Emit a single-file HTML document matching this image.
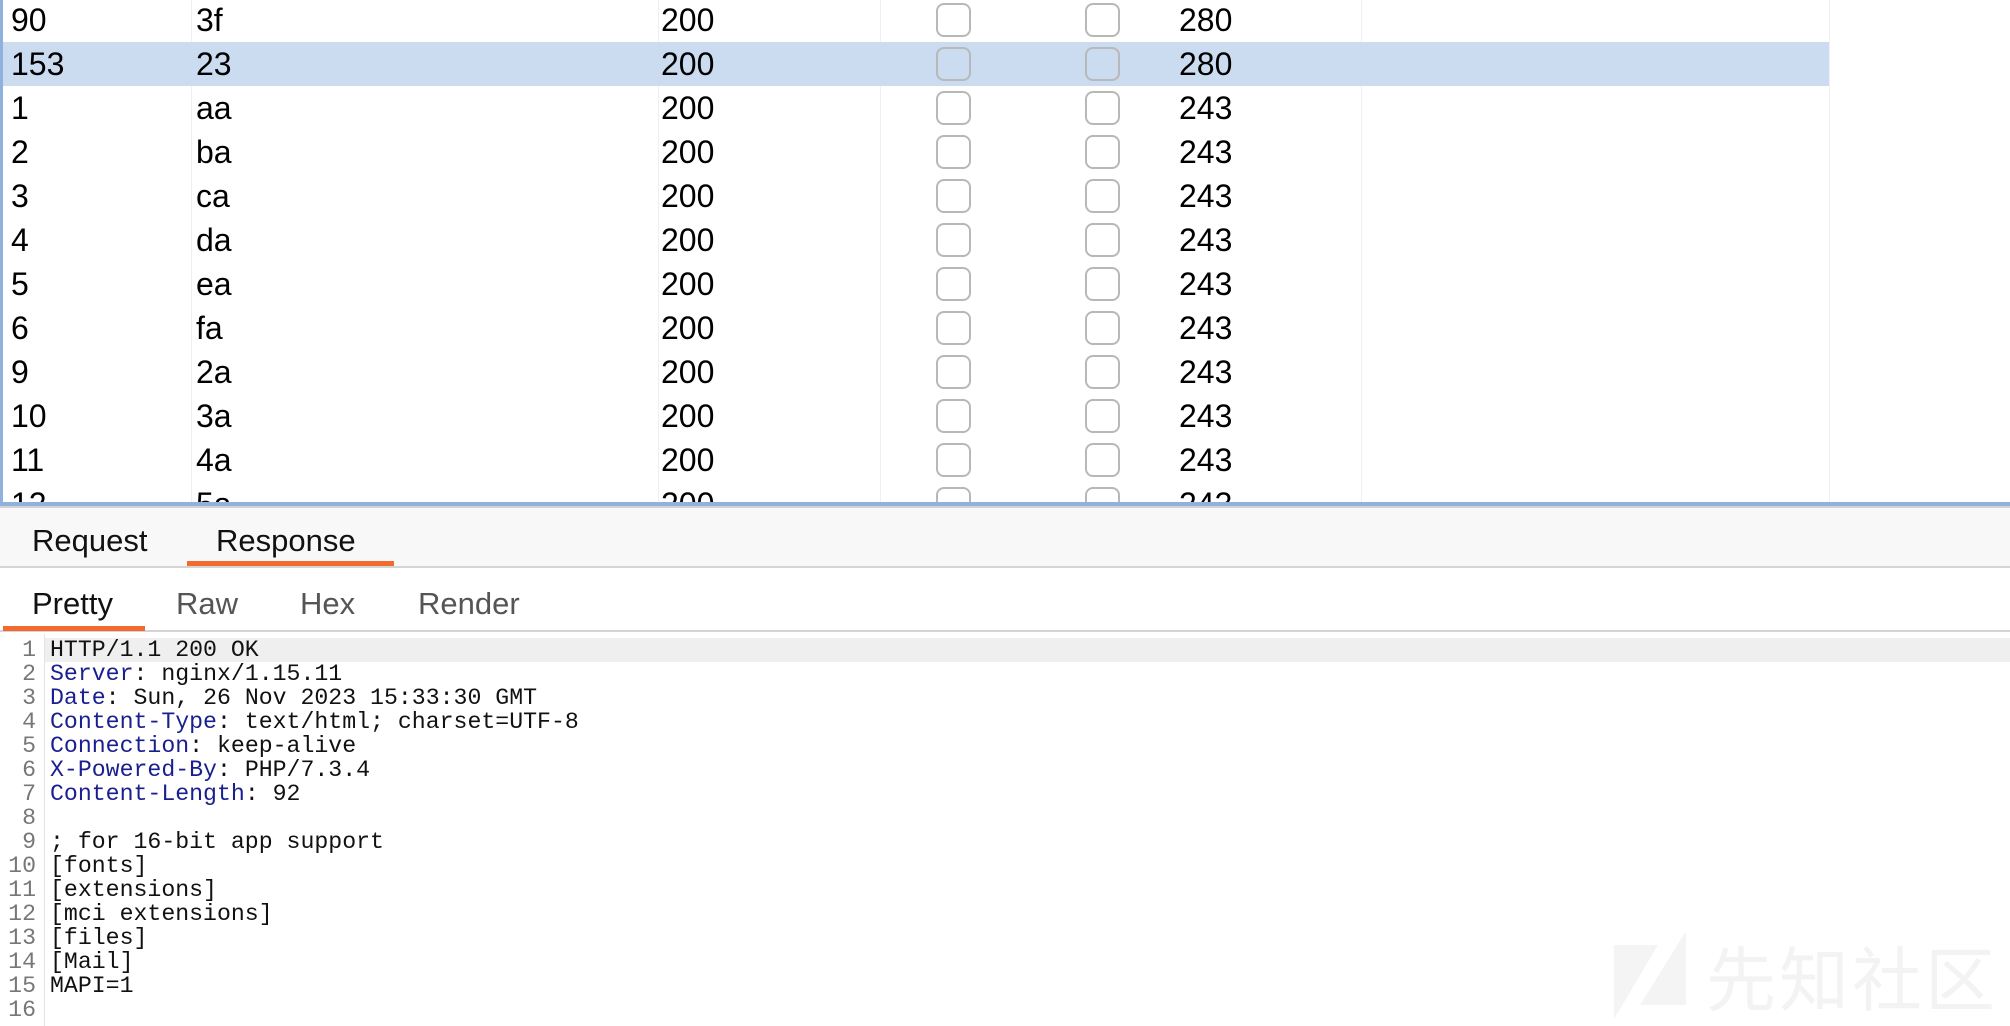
<!DOCTYPE html>
<html><head><meta charset="utf-8"><style>
*{margin:0;padding:0;box-sizing:border-box}
body{width:2010px;height:1026px;overflow:hidden;background:#fff;position:relative;font-family:"Liberation Sans",Arial,sans-serif}
.tbl{position:absolute;left:0;top:0;width:2010px;height:502px;overflow:hidden;border-left:3px solid #8fb1dc}
.row{position:absolute;left:0;height:44px;width:2010px}
.row.sel{background:#cbdbf0;width:1826px}
.c{position:absolute;top:0;line-height:44px;font-size:32px;color:#000}
.vl{position:absolute;top:0;height:502px;width:1px;background:#f0f0f0}
.cb{position:absolute;top:5px;width:35px;height:34px;border:2px solid #b8b8b8;border-radius:8px;background:transparent}
.tb{position:absolute;left:0;top:502px;width:2010px;height:4px;background:#8fb1dc}
.bar1{position:absolute;left:0;top:506px;width:2010px;height:62px;background:#f8f8f8;border-top:2px solid #d4d4d4;border-bottom:2px solid #d4d4d4}
.t{position:absolute;font-size:31px;color:#111}
.bar2{position:absolute;left:0;top:568px;width:2010px;height:64px;border-bottom:2px solid #d4d4d4;background:#fff}
.code{position:absolute;left:0;top:638px;font-family:"Liberation Mono",monospace;font-size:23.2px}
.ln{position:absolute;left:0;width:36px;text-align:right;color:#777;height:24px;line-height:24px}
.tx{position:absolute;left:50px;height:24px;line-height:24px;color:#111;white-space:pre}
.k{color:#1a1f8f}
</style></head><body>
<div class="tbl">
<div class="vl" style="left:188px"></div><div class="vl" style="left:655px"></div><div class="vl" style="left:877px"></div><div class="vl" style="left:1358px"></div><div class="vl" style="left:1826px"></div>
<div class="row" style="top:-2px"><span class="c" style="left:8px">90</span><span class="c" style="left:193px">3f</span><span class="c" style="left:658px">200</span><span class="cb" style="left:933px"></span><span class="cb" style="left:1082px"></span><span class="c" style="left:1176px">280</span></div>
<div class="row sel" style="top:42px"><span class="c" style="left:8px">153</span><span class="c" style="left:193px">23</span><span class="c" style="left:658px">200</span><span class="cb" style="left:933px"></span><span class="cb" style="left:1082px"></span><span class="c" style="left:1176px">280</span></div>
<div class="row" style="top:86px"><span class="c" style="left:8px">1</span><span class="c" style="left:193px">aa</span><span class="c" style="left:658px">200</span><span class="cb" style="left:933px"></span><span class="cb" style="left:1082px"></span><span class="c" style="left:1176px">243</span></div>
<div class="row" style="top:130px"><span class="c" style="left:8px">2</span><span class="c" style="left:193px">ba</span><span class="c" style="left:658px">200</span><span class="cb" style="left:933px"></span><span class="cb" style="left:1082px"></span><span class="c" style="left:1176px">243</span></div>
<div class="row" style="top:174px"><span class="c" style="left:8px">3</span><span class="c" style="left:193px">ca</span><span class="c" style="left:658px">200</span><span class="cb" style="left:933px"></span><span class="cb" style="left:1082px"></span><span class="c" style="left:1176px">243</span></div>
<div class="row" style="top:218px"><span class="c" style="left:8px">4</span><span class="c" style="left:193px">da</span><span class="c" style="left:658px">200</span><span class="cb" style="left:933px"></span><span class="cb" style="left:1082px"></span><span class="c" style="left:1176px">243</span></div>
<div class="row" style="top:262px"><span class="c" style="left:8px">5</span><span class="c" style="left:193px">ea</span><span class="c" style="left:658px">200</span><span class="cb" style="left:933px"></span><span class="cb" style="left:1082px"></span><span class="c" style="left:1176px">243</span></div>
<div class="row" style="top:306px"><span class="c" style="left:8px">6</span><span class="c" style="left:193px">fa</span><span class="c" style="left:658px">200</span><span class="cb" style="left:933px"></span><span class="cb" style="left:1082px"></span><span class="c" style="left:1176px">243</span></div>
<div class="row" style="top:350px"><span class="c" style="left:8px">9</span><span class="c" style="left:193px">2a</span><span class="c" style="left:658px">200</span><span class="cb" style="left:933px"></span><span class="cb" style="left:1082px"></span><span class="c" style="left:1176px">243</span></div>
<div class="row" style="top:394px"><span class="c" style="left:8px">10</span><span class="c" style="left:193px">3a</span><span class="c" style="left:658px">200</span><span class="cb" style="left:933px"></span><span class="cb" style="left:1082px"></span><span class="c" style="left:1176px">243</span></div>
<div class="row" style="top:438px"><span class="c" style="left:8px">11</span><span class="c" style="left:193px">4a</span><span class="c" style="left:658px">200</span><span class="cb" style="left:933px"></span><span class="cb" style="left:1082px"></span><span class="c" style="left:1176px">243</span></div>
<div class="row" style="top:482px"><span class="c" style="left:8px">12</span><span class="c" style="left:193px">5a</span><span class="c" style="left:658px">200</span><span class="cb" style="left:933px"></span><span class="cb" style="left:1082px"></span><span class="c" style="left:1176px">243</span></div>
</div>
<div class="tb"></div>
<div class="bar1">
<span class="t" style="left:32px;top:15px">Request</span>
<span class="t" style="left:216px;top:15px">Response</span>
<div style="position:absolute;left:187px;top:53px;width:207px;height:5px;background:#f26a30"></div>
</div>
<div class="bar2">
<span class="t" style="left:32px;top:18px">Pretty</span>
<span class="t" style="left:176px;top:18px;color:#555">Raw</span>
<span class="t" style="left:300px;top:18px;color:#555">Hex</span>
<span class="t" style="left:418px;top:18px;color:#555">Render</span>
<div style="position:absolute;left:3px;top:58px;width:142px;height:5px;background:#f26a30"></div>
</div>
<div style="position:absolute;left:45px;top:638px;width:1965px;height:24px;background:#efefef"></div>
<div style="position:absolute;left:44px;top:634px;width:1px;height:392px;background:#e4e4e4"></div>
<div class="code">
<div class="ln" style="top:0">1</div><div class="tx" style="top:0">HTTP/1.1 200 OK</div>
<div class="ln" style="top:24px">2</div><div class="tx" style="top:24px"><span class="k">Server</span>: nginx/1.15.11</div>
<div class="ln" style="top:48px">3</div><div class="tx" style="top:48px"><span class="k">Date</span>: Sun, 26 Nov 2023 15:33:30 GMT</div>
<div class="ln" style="top:72px">4</div><div class="tx" style="top:72px"><span class="k">Content-Type</span>: text/html; charset=UTF-8</div>
<div class="ln" style="top:96px">5</div><div class="tx" style="top:96px"><span class="k">Connection</span>: keep-alive</div>
<div class="ln" style="top:120px">6</div><div class="tx" style="top:120px"><span class="k">X-Powered-By</span>: PHP/7.3.4</div>
<div class="ln" style="top:144px">7</div><div class="tx" style="top:144px"><span class="k">Content-Length</span>: 92</div>
<div class="ln" style="top:168px">8</div>
<div class="ln" style="top:192px">9</div><div class="tx" style="top:192px">; for 16-bit app support</div>
<div class="ln" style="top:216px">10</div><div class="tx" style="top:216px">[fonts]</div>
<div class="ln" style="top:240px">11</div><div class="tx" style="top:240px">[extensions]</div>
<div class="ln" style="top:264px">12</div><div class="tx" style="top:264px">[mci extensions]</div>
<div class="ln" style="top:288px">13</div><div class="tx" style="top:288px">[files]</div>
<div class="ln" style="top:312px">14</div><div class="tx" style="top:312px">[Mail]</div>
<div class="ln" style="top:336px">15</div><div class="tx" style="top:336px">MAPI=1</div>
<div class="ln" style="top:360px">16</div>
</div>
<svg style="position:absolute;left:1614px;top:931px" width="74" height="88"><polygon points="0,14 44,14 0,88" fill="#f4f4f4"/><polygon points="72,0 72,74 26,74" fill="#f4f4f4"/></svg>
<div style="position:absolute;left:1706px;top:934px;font-family:'Noto Sans CJK SC',sans-serif;font-size:70px;line-height:84px;color:#f3f3f3;letter-spacing:3px">先知社区</div>
</body></html>
